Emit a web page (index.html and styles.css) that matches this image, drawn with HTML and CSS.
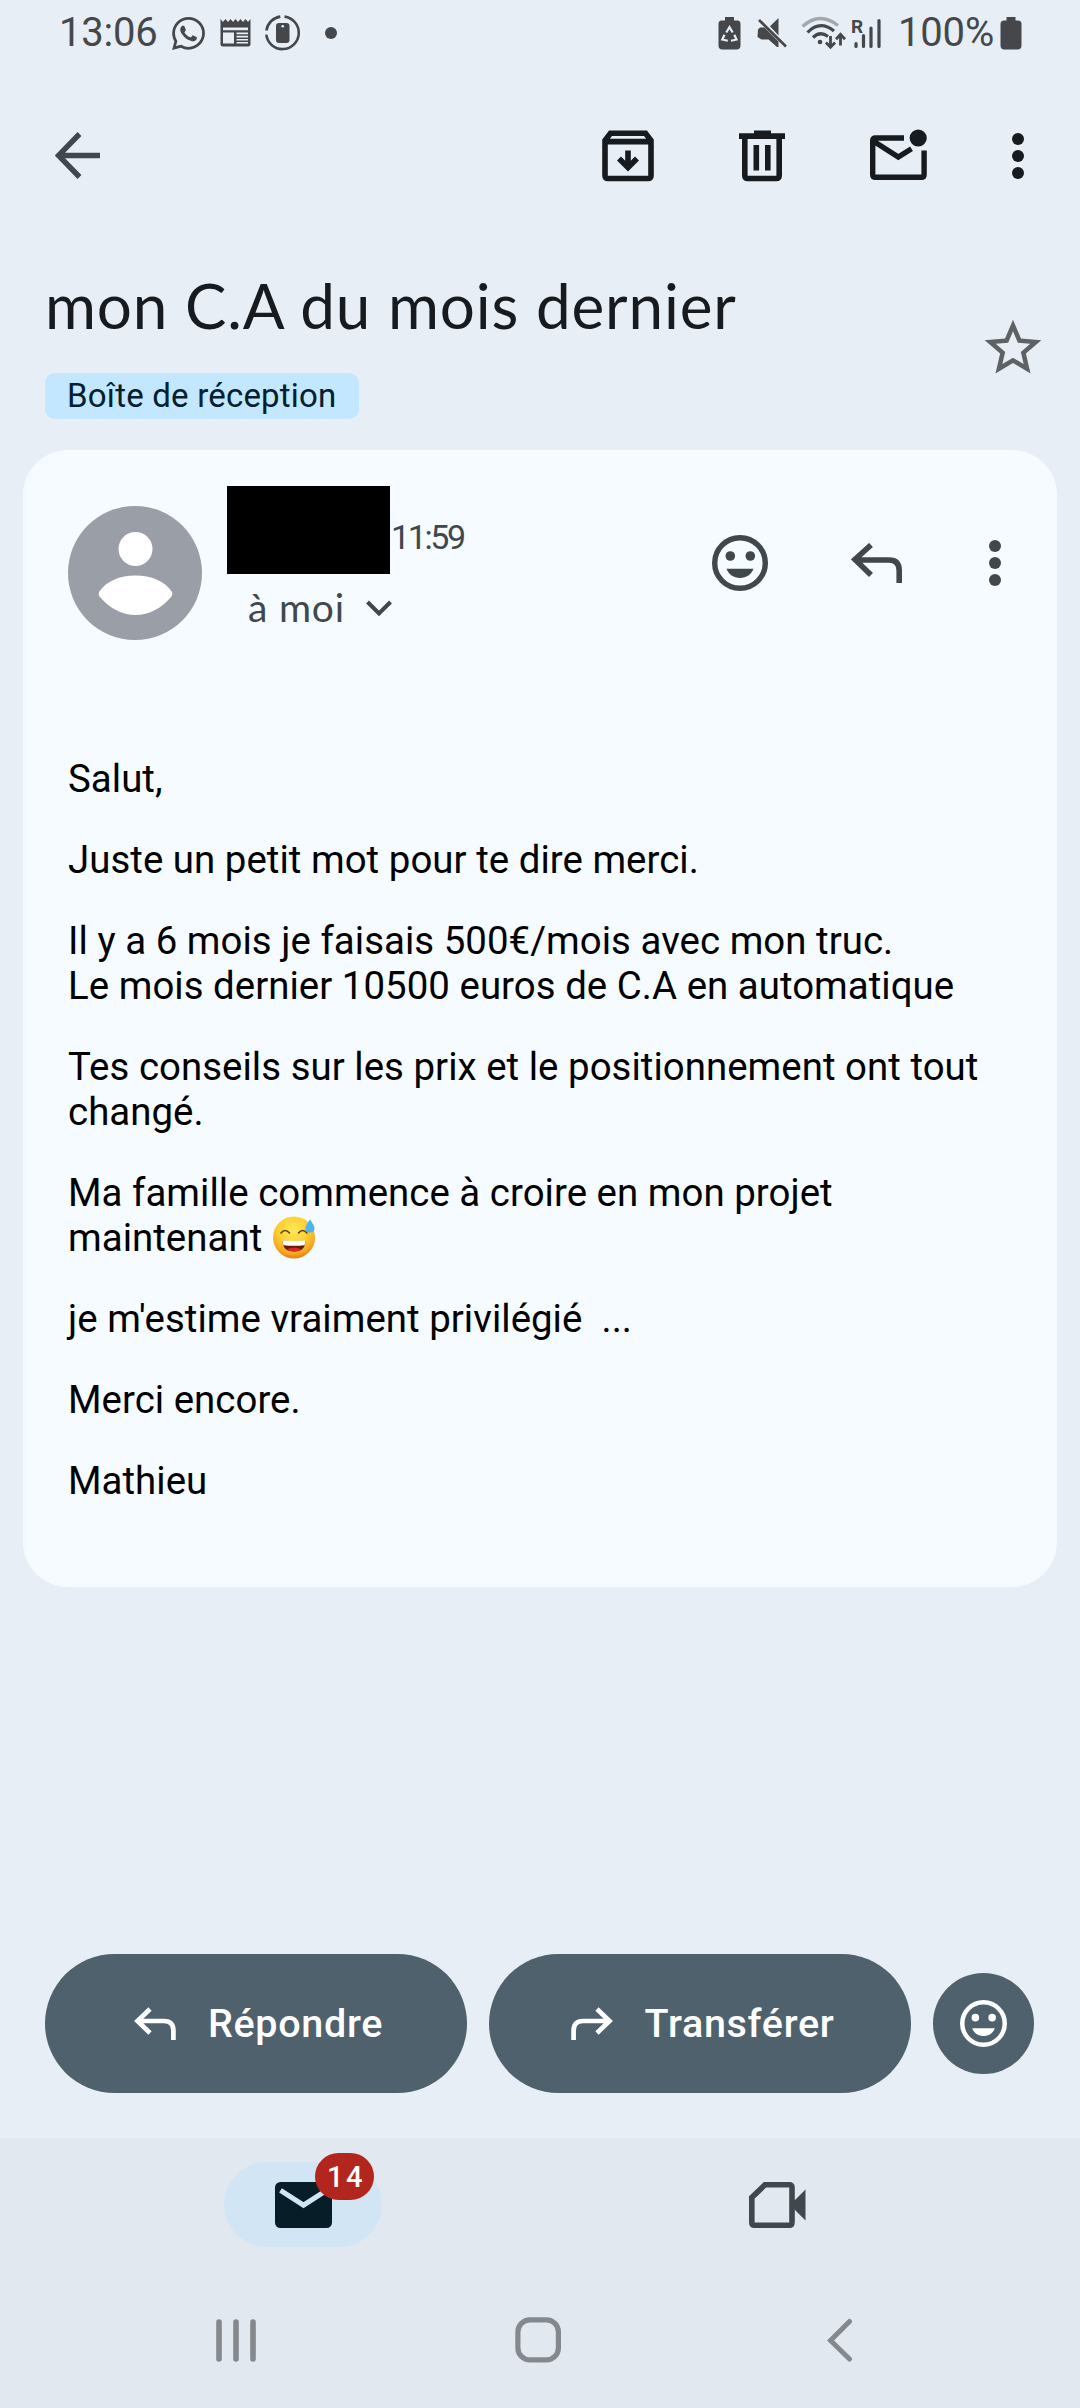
FILE: index.html
```html
<!DOCTYPE html>
<html lang="fr">
<head>
<meta charset="utf-8">
<title>mon C.A du mois dernier</title>
<link rel="stylesheet" href="styles.css">
</head>
<body>
<div class="screen">
  <header class="status">
    <div class="status-group status-left">
      <span class="status-text">13:06</span>
      <svg class="ic-whatsapp" width="33" height="33" viewBox="0 0 24 24" fill="currentColor"><path d="M17.472 14.382c-.297-.149-1.758-.867-2.03-.967-.273-.099-.471-.148-.67.15-.197.297-.767.966-.94 1.164-.173.199-.347.223-.644.075-.297-.15-1.255-.463-2.39-1.475-.883-.788-1.48-1.761-1.653-2.059-.173-.297-.018-.458.13-.606.134-.133.298-.347.446-.52.149-.174.198-.298.298-.497.099-.198.05-.371-.025-.52-.075-.149-.669-1.612-.916-2.207-.242-.579-.487-.5-.669-.51-.173-.008-.371-.01-.57-.01-.198 0-.52.074-.792.372-.272.297-1.04 1.016-1.04 2.479 0 1.462 1.065 2.875 1.213 3.074.149.198 2.096 3.2 5.077 4.487.709.306 1.262.489 1.694.625.712.227 1.36.195 1.871.118.571-.085 1.758-.719 2.006-1.413.248-.694.248-1.289.173-1.413-.074-.124-.272-.198-.57-.347m-5.421 7.403h-.004a9.87 9.87 0 01-5.031-1.378l-.361-.214-3.741.982.998-3.648-.235-.374a9.86 9.86 0 01-1.51-5.26c.001-5.45 4.436-9.884 9.888-9.884 2.64 0 5.122 1.03 6.988 2.898a9.825 9.825 0 012.893 6.994c-.003 5.45-4.437 9.884-9.885 9.884m8.413-18.297A11.815 11.815 0 0012.05 0C5.495 0 .16 5.335.157 11.892c0 2.096.547 4.142 1.588 5.945L.057 24l6.305-1.654a11.882 11.882 0 005.683 1.448h.005c6.554 0 11.89-5.335 11.893-11.893a11.821 11.821 0 00-3.48-8.413z"/></svg>
      <svg class="ic-news" width="31" height="28" viewBox="0 0 31 28"><path fill="currentColor" fill-rule="evenodd" d="M.5 0l2.500 3 2.500-3L8 3l2.500-3L13 3l2.500-3L18 3l2.500-3L23 3l2.500-3L28 3l2.500-3V25q0 2.500-2.500 2.500H3Q.5 27.500.5 25zM3 8.500v2.700h25V8.500zM3 13.500v11h11v-11zM16.500 13.500v1.800H28v-1.800zm0 3.300v1.600H28v-1.600zm0 3.100v1.600H28v-1.600zm0 3.100v1.600H28V23z"/></svg>
      <svg class="ic-care" width="37" height="38" viewBox="0 0 37 38"><path fill="none" stroke="currentColor" stroke-width="2.600" d="M20.500 2.600A16.300 16.300 0 1 1 2.300 20.700M2.400 16.500A16.300 16.300 0 0 1 16.300 2.600"/><rect x="12" y="9" width="13.500" height="20" rx="3" fill="currentColor"/><circle cx="18.700" cy="12.300" r="1.300" fill="#e7eef6"/></svg>
      <span class="status-dot"></span>
    </div>
    <div class="status-group status-right">
      <svg width="23" height="33" viewBox="0 0 23 33"><path fill="currentColor" d="M7 0h9v3.500h3.500Q22.500 3.500 22.500 7v21.500q0 4-4 4h-14q-4 0-4-4V7q0-3.500 3-3.500H7z"/><path fill="none" stroke="#e7eef6" stroke-width="2.200" d="M8.300 15.500l3.200-5.300 3.200 5.300M16.300 17.800l2.200 4.700-5.500 1.200M9.800 23.700l-5.500-1.200 2.200-4.700"/></svg>
      <svg class="ic-mute" width="30" height="30" viewBox="0 0 30 30"><path fill="currentColor" d="M21.500 0v17.500L13 8.200zM1 11.500l2-2h4.500l14 14V29h-1.500l-8.500-7.500H4.500L.5 19z"/><path stroke="currentColor" stroke-width="2.600" d="M2 2l27 26.500"/></svg>
      <svg class="ic-wifi" width="45" height="34" viewBox="0 0 45 34" fill="none" stroke="currentColor" stroke-width="3.200"><path stroke="#a2a8b0" d="M1.500 10.500Q18.500-5 37 9.500"/><path d="M6.500 16.500Q19 3.500 33 15"/><path d="M12 21.500Q19 14.500 27 20.500"/><circle cx="19" cy="26" r="2.300" fill="currentColor" stroke="none"/><path stroke-width="2.800" d="M29.500 20v11M25 26.500l4.500 4.800 4.500-4.800M39.500 29.500V19M35 23.200l4.500-4.800 4.500 4.800"/></svg>
      <span class="signal">
        <svg width="31" height="31" viewBox="0 0 31 31" fill="none" stroke="currentColor" stroke-width="3.200" stroke-linecap="round"><path d="M5 25.500v3M12.500 17.500v11M20 10v18.500M28 2.500v26"/></svg>
        <span class="signal-r">R</span>
      </span>
      <span class="status-text percent">100%</span>
      <svg class="ic-batt" width="22" height="33" viewBox="0 0 22 33"><path fill="currentColor" d="M6.500 0h9v3.500H18q3.500 0 3.500 3.500v21.500q0 4-4 4h-13q-4 0-4-4V7Q.5 3.500 4 3.500h2.500z"/></svg>
    </div>
  </header>

  <nav class="toolbar">
    <svg width="46" height="48" viewBox="0 0 46 48" fill="none" stroke="#41484d" stroke-width="5.400"><path d="M24.500 2L3.500 23.500 24.500 45M4 23.500h41"/></svg>
    <div class="toolbar-actions">
      <svg width="52" height="54" viewBox="0 0 52 54"><path fill="none" stroke="currentColor" stroke-width="5.600" d="M3 11.500V46.500q0 3 3 3h40q3 0 3-3V11.500L43.500 4.200h-35zM3 12.600h46"/><path fill="none" stroke="currentColor" stroke-width="5.600" d="M26 21.500v18M17 29.500l9 9 9-9"/></svg>
      <svg width="46" height="54" viewBox="0 0 46 54"><path fill="currentColor" d="M15 1.500h17v2.800h14v5.600H0V4.300h15z"/><path fill="none" stroke="currentColor" stroke-width="5.600" d="M5.800 8v38.500q0 3 3 3h28.400q3 0 3-3V8"/><path fill="currentColor" d="M14.500 16h5.600v25.500h-5.600zM26 16h5.600v25.500H26z"/></svg>
      <svg width="57" height="54" viewBox="0 0 57 54"><path fill="none" stroke="currentColor" stroke-width="5.400" d="M34 9H5.500q-2.800 0-2.800 2.800V45.500q0 2.800 2.800 2.800h45.800q2.800 0 2.800-2.800V21.500M4 12.500L28.300 28 41.500 19.800"/><circle cx="48.200" cy="9" r="8.600" fill="currentColor"/></svg>
      <svg width="12" height="46" viewBox="0 0 12 46" fill="currentColor"><circle cx="6" cy="6" r="6"/><circle cx="6" cy="23" r="6"/><circle cx="6" cy="40" r="6"/></svg>
    </div>
  </nav>

  <section class="subject">
    <div class="subject-main">
      <h1>mon C.A du mois dernier</h1>
      <span class="chip">Boîte de réception</span>
    </div>
    <svg class="star" width="68" height="68" viewBox="0 0 24 24" fill="#5f6264"><path d="M22 9.240l-7.190-.62L12 2 9.190 8.630 2 9.240l5.460 4.730L5.820 21 12 17.270 18.180 21l-1.630-7.030L22 9.240zM12 15.400l-3.760 2.270 1-4.280-3.320-2.880 4.380-.38L12 6.100l1.710 4.040 4.380.38-3.320 2.880 1 4.280L12 15.400z"/></svg>
  </section>

  <main class="card">
    <div class="sender">
      <svg class="avatar" width="134" height="134" viewBox="0 0 134 134"><circle cx="67" cy="67" r="67" fill="#9a9ea6"/><circle cx="67.500" cy="43" r="17" fill="#fff"/><path fill="#fff" d="M31 86C38 75 52 69.500 67.500 69.500S97 75 104 86q1 2.500-.5 4.500C94 102 81 109 67.500 109S41 102 31.500 90.500Q30 88.500 31 86z"/></svg>
      <div class="sender-info">
        <div class="sender-top"><span class="redacted"></span><span class="time">11:59</span></div>
        <div class="recipient"><span>à moi</span><svg width="26" height="17" viewBox="0 0 26 17" fill="none" stroke="currentColor" stroke-width="4"><path d="M1.500 2L13 13.500 24.500 2"/></svg></div>
      </div>
      <div class="sender-actions">
        <svg width="56" height="56" viewBox="0 0 56 56" fill="currentColor"><circle cx="28" cy="28" r="25.300" fill="none" stroke="currentColor" stroke-width="5.400"/><circle cx="18.300" cy="21" r="4.800"/><circle cx="38.300" cy="21" r="4.800"/><path d="M14.500 33.800h27C39.500 39.500 34.300 43 28 43s-11.500-3.500-13.500-9.200z"/></svg>
        <svg class="ic-reply" width="52" height="40" viewBox="0 0 52 40" fill="none" stroke="currentColor" stroke-width="5.600"><path d="M20 2L4 16.500 20 32M4.500 17H38q10.200 0 10.200 10.500V40"/></svg>
        <svg class="ic-more" width="12" height="46" viewBox="0 0 12 46" fill="currentColor"><circle cx="6" cy="6" r="6"/><circle cx="6" cy="23" r="6"/><circle cx="6" cy="40" r="6"/></svg>
      </div>
    </div>
    <article class="message">
      <p>Salut,</p>
      <p>Juste un petit mot pour te dire merci.</p>
      <p>Il y a 6 mois je faisais 500€/mois avec mon truc.<br>Le mois dernier 10500 euros de C.A en automatique</p>
      <p>Tes conseils sur les prix et le positionnement ont tout changé.</p>
      <p>Ma famille commence à croire en mon projet<br>maintenant <svg class="emoji" width="42" height="43" viewBox="0 0 42 43" role="img" aria-label="sourire avec goutte de sueur">
        <defs>
          <radialGradient id="face" cx=".48" cy=".32" r=".7"><stop offset="0" stop-color="#ffe85c"/><stop offset=".5" stop-color="#fdd030"/><stop offset=".8" stop-color="#f9a81f"/><stop offset="1" stop-color="#d97a10"/></radialGradient>
        </defs>
        <circle cx="21" cy="21.500" r="21" fill="url(#face)"/>
        <path fill="none" stroke="#5b3a12" stroke-width="1.500" stroke-linecap="round" d="M8 17q4-5 8.500 0M25.500 17q4-5 8.500 0"/>
        <path fill="#6e1710" d="M9.500 24.500q11.500 1.200 23 0Q32.500 35.500 21 35.500T9.500 24.500z"/>
        <path fill="#fff" d="M9.500 24.300q11.500 1.200 23 0 0 3-1 5-10.500 1-21 0-1-2-1-5z"/>
        <path fill="#d5281f" d="M14 33.200q7-3.500 14 0-2.500 2.300-7 2.300t-7-2.300z"/>
        <path fill="#4db5ea" d="M37 3.500q4.500 6 4.500 9 0 4-4.500 4-4.700 0-4.700-4 0-3 4.700-9z"/>
      </svg></p>
      <p>je m'estime vraiment privilégié&nbsp; ...</p>
      <p>Merci encore.</p>
      <p>Mathieu</p>
    </article>
  </main>

  <div class="actions">
    <button class="pill"><svg width="42" height="33" viewBox="0 0 42 33" fill="none" stroke="currentColor" stroke-width="4.700"><path d="M16 2L3.500 14 16 26M3.500 14H30q9.400 0 9.400 9.500V33"/></svg><span>Répondre</span></button>
    <button class="pill"><svg width="42" height="33" viewBox="0 0 42 33" fill="none" stroke="currentColor" stroke-width="4.700"><path d="M26 2l12.500 12L26 26M38.500 14H12q-9.400 0-9.400 9.500V33"/></svg><span>Transférer</span></button>
    <button class="round"><svg width="47" height="47" viewBox="0 0 56 56" fill="currentColor"><circle cx="28" cy="28" r="25.300" fill="none" stroke="currentColor" stroke-width="5.400"/><circle cx="18.300" cy="21" r="4.500"/><circle cx="38.300" cy="21" r="4.500"/><path d="M14.500 33.800h27C39.500 39.500 34.300 43 28 43s-11.500-3.500-13.500-9.200z"/></svg></button>
  </div>

  <footer class="bottom">
    <div class="tabs">
      <div class="tab tab-active">
        <svg width="57" height="46" viewBox="0 0 57 46"><rect width="57" height="46" rx="5.500" fill="#071d28"/><path fill="none" stroke="#d1e5f4" stroke-width="5" d="M5.500 8.300L28.500 23.200 51.500 8.300"/></svg>
        <span class="badge">14</span>
      </div>
      <div class="tab">
        <svg width="57" height="46" viewBox="0 0 57 46"><path fill="none" stroke="#41484d" stroke-width="5.600" d="M2.800 15.500V40.500q0 2.700 2.800 2.700h34.600q2.800 0 2.800-2.700V5.500q0-2.700-2.800-2.700H16z"/><path fill="#41484d" d="M45 19L56.500 7.500v31L45 27z"/></svg>
      </div>
    </div>
    <div class="sysnav">
      <svg width="42" height="46" viewBox="0 0 42 46" fill="none" stroke="#85888d" stroke-width="5.600" stroke-linecap="round"><path d="M4 5v37M21 5v37M38 5v37"/></svg>
      <svg class="ic-home" width="46" height="46" viewBox="0 0 46 46" fill="none" stroke="#85888d" stroke-width="5.200"><rect x="2.900" y="2.900" width="40.500" height="40" rx="12"/></svg>
      <svg width="26" height="46" viewBox="0 0 26 46" fill="none" stroke="#85888d" stroke-width="5" stroke-linecap="round"><path d="M22.500 4.500L3.500 23.500l19 18.500"/></svg>
    </div>
  </footer>
</div>
</body>
</html>
```

FILE: styles.css
```css
* {
  box-sizing: border-box;
}

body {
  margin: 0;
  background: #e7eef6;
  font-family: Roboto, "Liberation Sans", sans-serif;
}

svg {
  display: block;
  flex: none;
}

.screen {
  width: 1080px;
  height: 2408px;
  display: flex;
  flex-direction: column;
  overflow: hidden;
}

/* Status bar */
.status {
  height: 66px;
  padding: 0 58px 0 59px;
  display: flex;
  justify-content: space-between;
  color: #45474a;
}

.status-group {
  display: flex;
  align-items: center;
}

.status-text {
  font-size: 40px;
  line-height: 66px;
  letter-spacing: -0.2px;
}

.ic-whatsapp { margin-left: 14px; }
.ic-news { margin-left: 15px; }
.ic-care { margin-left: 13px; }

.status-dot {
  width: 12px;
  height: 12px;
  margin-left: 24px;
  border-radius: 50%;
  background: currentColor;
}

.ic-mute { margin-left: 16px; }
.ic-wifi { margin-left: 14px; }

.signal {
  position: relative;
  margin-left: 5px;
}

.signal-r {
  position: absolute;
  left: 0;
  top: -1px;
  font-size: 19px;
  font-weight: 700;
  line-height: 19px;
}

.percent { margin-left: 16px; }
.ic-batt { margin-left: 6px; }

/* Toolbar */
.toolbar {
  height: 180px;
  padding: 0 56px 0 55px;
  display: flex;
  align-items: center;
  justify-content: space-between;
  color: #171b1f;
}

.toolbar-actions {
  display: flex;
  align-items: center;
  gap: 85px;
}

/* Subject */
.subject {
  height: 204px;
  padding: 21px 33px 0 45px;
  display: flex;
  justify-content: space-between;
}

h1 {
  margin: 0;
  font: 400 62px/76px Lato, "Liberation Sans", sans-serif;
  letter-spacing: 0.85px;
  color: #171b1f;
}

.chip {
  display: block;
  width: 314px;
  height: 46px;
  margin-top: 30px;
  padding-left: 22px;
  border-radius: 10px;
  background: #c2e7ff;
  color: #04202e;
  font-size: 33px;
  line-height: 46px;
  letter-spacing: 0.2px;
}

.star { margin-top: 47px; }

/* Message card */
.card {
  height: 1137px;
  margin: 0 23px;
  padding: 36px 56px 0 45px;
  border-radius: 45px;
  background: #f5fbff;
}

.sender {
  display: flex;
  color: #41484d;
}

.avatar { margin-top: 20px; }

.sender-info { margin-left: 25px; }

.sender-top {
  display: flex;
  align-items: center;
}

.redacted {
  width: 163px;
  height: 88px;
  background: #000;
}

.time {
  margin-left: 1px;
  padding-top: 14px;
  font-size: 34px;
  letter-spacing: -2.400px;
}

.recipient {
  display: flex;
  align-items: center;
  gap: 21px;
  padding: 11px 0 0 21px;
  font: 400 39px/44px Lato, "Liberation Sans", sans-serif;
  letter-spacing: 0.8px;
}

.recipient svg { margin-top: 3px; }

.sender-actions {
  margin-left: auto;
  padding-top: 49px;
  display: flex;
  align-items: flex-start;
}

.ic-reply { margin: 8px 0 0 83px; }
.ic-more { margin: 5px 0 0 86px; }

.message {
  margin: 116px -10px 0 0;
  color: #000;
  font-size: 38.400px;
  line-height: 45px;
  letter-spacing: 0.04px;
}

.message p {
  margin: 0 0 36px;
}

.emoji {
  display: inline-block;
  vertical-align: -8px;
  margin: -12px 0 0 1px;
}

/* Quick actions */
.actions {
  height: 139px;
  margin-top: 367px;
  padding: 0 45px;
  display: flex;
  align-items: center;
  gap: 22px;
}

.pill,
.round {
  border: 0;
  background: #4f616d;
  color: #fff;
}

.pill {
  width: 422px;
  height: 139px;
  padding: 0 0 0 5px;
  border-radius: 70px;
  display: flex;
  align-items: center;
  justify-content: center;
  gap: 32px;
  font: 500 39.500px/50px Roboto, "Liberation Sans", sans-serif;
  letter-spacing: 0.7px;
}

.round {
  width: 101px;
  height: 101px;
  padding: 0;
  border-radius: 50%;
  display: grid;
  place-items: center;
}

/* Bottom bar */
.bottom {
  height: 270px;
  margin-top: auto;
  background: #e2e8f0;
}

.tabs {
  height: 133px;
  display: flex;
  align-items: center;
  justify-content: space-between;
  padding: 0 224px;
}

.tab {
  position: relative;
  width: 158px;
  height: 85px;
  border-radius: 43px;
  display: grid;
  place-items: center;
}

.tab-active { background: #d1e5f4; }

.badge {
  position: absolute;
  left: 91px;
  top: -9px;
  width: 59px;
  height: 47px;
  padding-left: 3px;
  border-radius: 24px;
  background: #b3261e;
  color: #fff;
  font-size: 29px;
  font-weight: 500;
  line-height: 48px;
  text-align: center;
  letter-spacing: 2.500px;
}

.sysnav {
  height: 137px;
  padding: 0 227px 0 215px;
  display: flex;
  align-items: center;
  justify-content: space-between;
}

.ic-home { margin-left: -9px; }
```
